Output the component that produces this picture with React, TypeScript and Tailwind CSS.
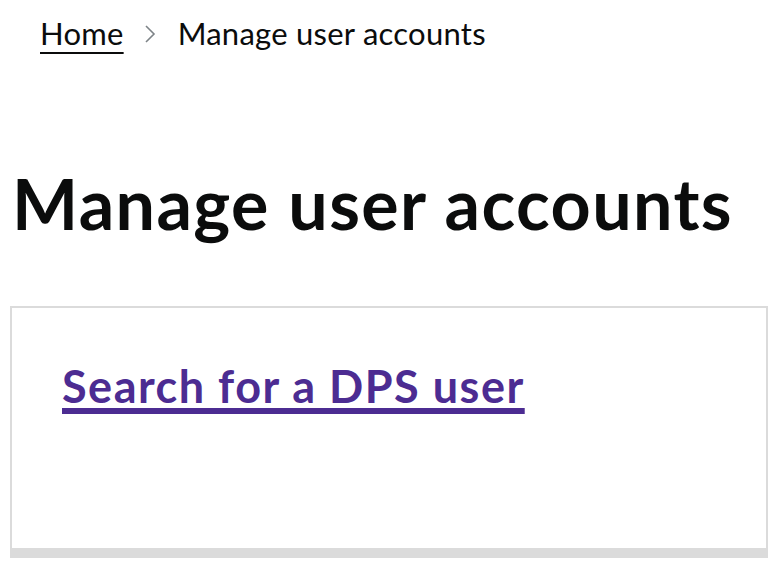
export default function App() {
  return (
    <div className="min-h-screen w-full bg-white font-['Lato',sans-serif] text-[#0b0c0c]">
      <main className="px-[10px]">
        {/* Breadcrumbs */}
        <nav className="pt-[13px] pl-[30px]">
          <ol className="flex items-center text-[31px] leading-[40px] tracking-[0.25px]">
            <li>
              <a
                href="#"
                className="underline decoration-[2px] underline-offset-[7px] text-[#0b0c0c]"
              >
                Home
              </a>
            </li>
            <li className="ml-[20px] mr-[22px] mt-[2px] flex items-center">
              <svg width="12" height="18" viewBox="0 0 12 18" fill="none">
                <polyline
                  points="2,1 10,9 2,17"
                  stroke="#7d8387"
                  strokeWidth="1.6"
                />
              </svg>
            </li>
            <li>Manage user accounts</li>
          </ol>
        </nav>

        {/* Page heading */}
        <h1 className="mt-[110px] pl-[2px] text-[70px] leading-[80px] font-bold tracking-[1.4px]">
          Manage user accounts
        </h1>

        {/* Card */}
        <div className="mt-[63px] h-[252px] w-[758px] border-2 border-b-[10px] border-[#dbdbdb] pl-[50px] pt-[50px]">
          <a
            href="#"
            className="text-[45px] leading-[56px] font-bold tracking-[1.5px] text-[#4c2c92] underline decoration-[6px] underline-offset-[5px]"
          >
            Search for a DPS user
          </a>
        </div>
      </main>
    </div>
  );
}
